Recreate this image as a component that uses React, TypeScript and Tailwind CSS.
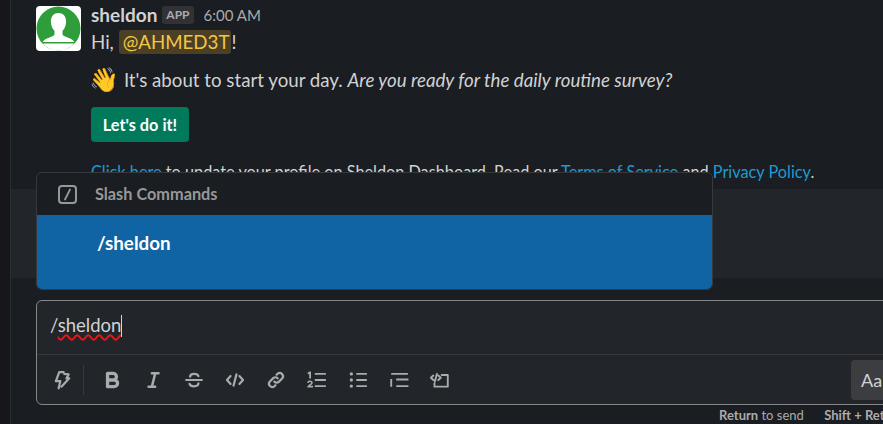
import React from "react";

const Ic = ({ children, w = 20 }: { children: React.ReactNode; w?: number }) => (
  <svg width={w} height={20} viewBox="0 0 18 18" fill="none" stroke="#a9abad" strokeWidth={1.7} strokeLinecap="round" strokeLinejoin="round">
    {children}
  </svg>
);

const Avatar = () => (
  <div className="w-[45px] h-[45px] bg-white rounded-[4px] shrink-0">
    <svg width="45" height="45" viewBox="0 0 45 45">
      <circle cx="22.5" cy="22.5" r="22" fill="#2f9e3a" />
      <path d="M22.5 7c4.6 0 7.6 3.4 7.6 8.4 0 4-1.6 7.4-3.6 9.4v3.2c0 1.2 1 1.8 2.6 2.4l5.6 2.3c1.8.8 3 2 3.6 3.4H6.7c.6-1.4 1.8-2.6 3.6-3.4l5.6-2.3c1.6-.6 2.6-1.2 2.6-2.4v-3.2c-2-2-3.6-5.4-3.6-9.4C14.900 10.400 17.900 7 22.500 7z" fill="#fff" />
      <path d="M7 37.500h31c-3.500 4.300-9 7-15.500 7S10.500 41.800 7 37.500z" fill="#fff" />
    </svg>
  </div>
);

export default function App() {
  return (
    <div className="relative w-[883px] h-[424px] overflow-hidden flex bg-[#1a1d21] text-[#d1d2d3] font-['Lato','Noto_Sans',sans-serif]">
      <div className="w-[10px] shrink-0 bg-[#17161a]" />
      <div className="w-px shrink-0 bg-[#2c2d30]" />
      <div className="flex-1 min-w-0 flex flex-col">
        <div className="h-[189px] shrink-0 overflow-hidden pl-[25px] pt-[6px] flex gap-[10px]">
          <Avatar />
          <div className="min-w-0 text-[18.7px] leading-[24px] whitespace-nowrap">
            <div className="flex items-center h-[18px]">
              <span className="font-bold text-[19px]">sheldon</span>
              <span className="ml-[5px] h-[18px] px-[4px] rounded-[3px] bg-[#313235] text-[#ababad] text-[12px] leading-[18px] font-bold">APP</span>
              <span className="ml-[10px] text-[15px] text-[#ababad]">6:00 AM</span>
            </div>
            <div className="mt-[4px] h-[28px] flex items-center">
              Hi,&nbsp;<span className="pl-[4px] pr-[2px] rounded-[3px] bg-[#4b3f25] text-[#f2c744] leading-[24px]">@AHMED3T</span>!
            </div>
            <div className="mt-[12px] h-[24px] flex items-center">
              <span className="text-[24px] leading-[24px] -ml-[2px] font-['Noto_Color_Emoji','DejaVu_Sans',sans-serif]">👋</span>
              <span className="ml-[5px]">It's about to start your day.&nbsp;<em>Are you ready for the daily routine survey?</em></span>
            </div>
            <button className="block mt-[15px] h-[35px] w-[98px] rounded-[4px] bg-[#007a5a] text-white text-[16.300px] font-bold">Let's do it!</button>
            <div className="mt-[18px] text-[16.270px] leading-[24px]">
              <span className="text-[#1d9bd1]">Click here</span> to update your profile on Sheldon Dashboard. Read our <span className="text-[#1d9bd1]">Terms of Service</span> and <span className="text-[#1d9bd1]">Privacy Policy</span>.
            </div>
          </div>
        </div>

        <div className="h-[89px] shrink-0 bg-[#222529]" />

        <div className="ml-[25px] mt-[22px] w-[900px] h-[105px] shrink-0 rounded-[6px] border border-[#868789] bg-[#222529] flex flex-col">
          <div className="h-[53px] shrink-0 pl-[13px] pt-[12px] text-[18.500px] leading-[24px]">
            <span>/</span>
            <span className="underline decoration-wavy decoration-[#f01414] decoration-[1.500px] underline-offset-[2px]">sheldon</span>
            <span className="inline-block w-px h-[22px] bg-[#d1d2d3] align-[-5px]" />
          </div>
          <div className="h-px shrink-0 bg-[#38393c]" />
          <div className="flex-1 flex items-center pl-[15px] relative">
            <Ic><path d="M10.500 2H6.500L3.500 10H7.500L6 16.500M11 3.500L15 4 13 7.500H15.500L8.500 15" strokeWidth={2} /></Ic>
            <div className="w-px h-[30px] bg-[#38393c] ml-[11px] mr-[18px]" />
            <div className="flex items-center gap-[21px]">
              <Ic><path d="M5 3h5a3 3 0 0 1 0 6H5zM5 9h6a3 3 0 0 1 0 6H5z" strokeWidth={3} /></Ic>
              <Ic><path d="M8 3h6M5 15h6M11 3L8 15" strokeWidth={2.2} /></Ic>
              <Ic><path d="M2 9h14M13 5.500C12.500 4 11 3.500 9 3.500 7 3.500 5.500 4.500 5.500 6M5 12.500c.5 1.500 2 2.200 4 2.200s4-.8 4-2.700" strokeWidth={2} /></Ic>
              <Ic><path d="M5 5.500L1.800 9 5 12.500M13 5.500L16.200 9 13 12.500M10.300 4L7.700 14" strokeWidth={2} /></Ic>
              <Ic><path d="M7.500 10.500a3 3 0 0 0 4.200 0l3-3a3 3 0 0 0-4.200-4.200L9.500 4.300M10.500 7.500a3 3 0 0 0-4.200 0l-3 3a3 3 0 0 0 4.200 4.200l1-1" strokeWidth={2} /></Ic>
              <Ic>
                <path d="M1.300 3l1.500-1v5" strokeWidth={1.6} />
                <path d="M1 11c.5-1.200 3.500-1.200 3.500.5 0 1.500-3.500 2.500-3.500 3.500h3.800" strokeWidth={1.5} />
                <path d="M7 3.500h10M7 9h10M7 14.500h10" strokeLinecap="butt" />
              </Ic>
              <Ic>
                <circle cx="3" cy="3.500" r="1.500" fill="#a9abad" stroke="none" />
                <circle cx="3" cy="9" r="1.500" fill="#a9abad" stroke="none" />
                <circle cx="3" cy="14.500" r="1.500" fill="#a9abad" stroke="none" />
                <path d="M7.500 3.500h9.500M7.500 9h9.500M7.500 14.500h9.500" strokeLinecap="butt" />
              </Ic>
              <Ic><path d="M2 3.500h15M2 8v7M6.500 8.500h11M6.500 14.500h11" strokeLinecap="butt" /></Ic>
              <Ic><path d="M3 5L.8 7 3 9M7.500 5L9.700 7 7.500 9M6.200 3.500L4.300 10.500M10.500 4.500h5.500v10.500H4V12" /></Ic>
            </div>
            <div className="absolute left-[814px] top-[5px] w-[60px] h-[40px] rounded-[4px] bg-[#3c3d40] flex items-center pl-[10px] text-[18px]">Aa</div>
          </div>
        </div>

        <div className="pl-[708px] mt-[1px] w-[900px] whitespace-nowrap text-[13px] leading-[18px] text-[#ababad]">
          <b>Return</b> to send <span className="ml-[17px]"><b>Shift + Return</b></span>
        </div>
      </div>

      <div className="absolute left-[36px] top-[172px] w-[677px] h-[118px] rounded-[6px] border border-[#38393c] bg-[#1a1d21] overflow-hidden">
        <div className="h-[42px] flex items-center pl-[21px]">
          <div className="w-[19px] h-[19px] rounded-[4px] border-2 border-[#979899] flex items-center justify-center">
            <svg width="11" height="13" viewBox="0 0 11 13"><path d="M8 1.500L3 11.500" stroke="#979899" strokeWidth="1.800" strokeLinecap="round" /></svg>
          </div>
          <span className="ml-[18px] text-[16.300px] font-bold text-[#979899]">Slash Commands</span>
        </div>
        <div className="h-[75px] bg-[#1164a3] pl-[60px] pt-[16px] text-white text-[18.800px] leading-[24px] font-bold">/sheldon</div>
      </div>
    </div>
  );
}
